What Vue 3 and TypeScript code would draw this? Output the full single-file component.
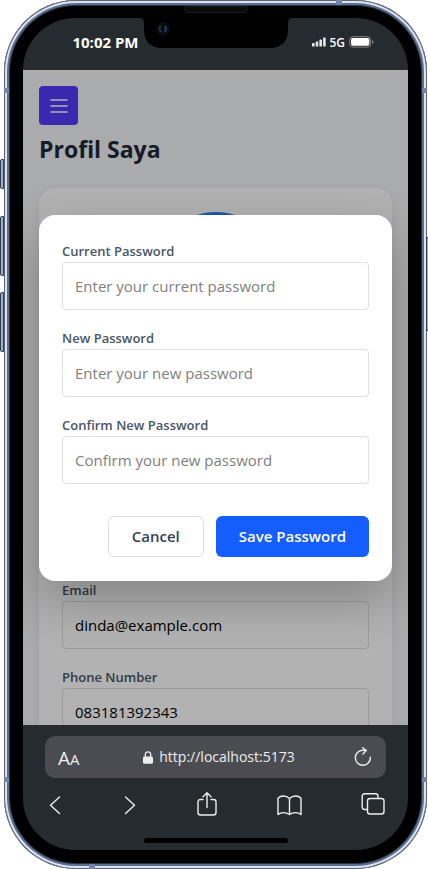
<script setup lang="ts">
import { reactive } from 'vue'

interface Field {
  id: string
  label: string
  placeholder: string
}

const passwordFields: Field[] = [
  { id: 'current', label: 'Current Password', placeholder: 'Enter your current password' },
  { id: 'next', label: 'New Password', placeholder: 'Enter your new password' },
  { id: 'confirm', label: 'Confirm New Password', placeholder: 'Confirm your new password' },
]

const passwords = reactive<Record<string, string>>({ current: '', next: '', confirm: '' })
const profile = reactive({ email: 'dinda@example.com', phone: '083181392343' })
</script>

<template>
  <div class="stage">
    <div class="phone">
      <i class="key key-mute"></i>
      <i class="key key-up"></i>
      <i class="key key-down"></i>
      <i class="key key-power"></i>
      <i class="band band-top"></i>
      <i class="band band-bottom"></i>
      <i class="band band-left-top"></i>
      <i class="band band-left-bottom"></i>
      <i class="band band-right-top"></i>
      <i class="band band-right-bottom"></i>
      <i class="speaker"></i>

      <div class="screen">
        <header class="status">
          <span class="time">10:02 PM</span>
          <svg class="notch" width="152" height="30" viewBox="0 0 152 30" aria-hidden="true">
            <path d="M0 0H152Q148 0 148 5V11Q148 30 129 30H23Q4 30 4 11V5Q4 0 0 0Z" fill="#000" />
            <circle cx="23" cy="11" r="7" fill="#0b0c0f" />
            <circle cx="23" cy="11" r="4" fill="#080c18" />
            <path d="M21 8q-3 3 0 6" stroke="#23464f" stroke-width="1.4" fill="none" />
            <path d="M25 8q2 3 0 6" stroke="#29377c" stroke-width="2" fill="none" />
          </svg>
          <div class="signals">
            <svg width="14" height="10" viewBox="0 0 14 10" fill="#e6e7e8" aria-hidden="true">
              <rect x="0" y="6" width="2.6" height="3.5" rx=".6" />
              <rect x="3.7" y="4.5" width="2.6" height="5" rx=".6" />
              <rect x="7.4" y="2.5" width="2.6" height="7" rx=".6" />
              <rect x="11.1" y="0.5" width="2.6" height="9" rx=".6" />
            </svg>
            <span>5G</span>
            <svg width="25" height="12" viewBox="0 0 25 12" aria-hidden="true">
              <rect x=".7" y=".7" width="21" height="10.4" rx="3" fill="none" stroke="#84878a" />
              <rect x="2" y="2" width="18.4" height="7.8" rx="1.8" fill="#fff" />
              <path d="M23 4.2q1.6.4 1.6 1.7T23 7.7z" fill="#84878a" />
            </svg>
          </div>
        </header>

        <main class="viewport">
          <div class="page">
            <button class="menu" type="button" aria-label="Menu">
              <svg width="24" height="24" viewBox="0 0 24 24" aria-hidden="true">
                <path d="M4 6h16M4 12h16M4 18h16" stroke="#fff" stroke-width="1.6" stroke-linecap="round" />
              </svg>
            </button>
            <h1>Profil Saya</h1>
            <section class="card">
              <div class="portrait"><div class="avatar"></div></div>
              <div class="field">
                <label for="email">Email</label>
                <input id="email" v-model="profile.email" type="email" />
              </div>
              <div class="field">
                <label for="phone">Phone Number</label>
                <input id="phone" v-model="profile.phone" type="tel" />
              </div>
            </section>
          </div>

          <div class="overlay">
            <form class="dialog" role="dialog" @submit.prevent>
              <div v-for="f in passwordFields" :key="f.id" class="field">
                <label :for="f.id">{{ f.label }}</label>
                <input :id="f.id" v-model="passwords[f.id]" type="password" :placeholder="f.placeholder" />
              </div>
              <div class="actions">
                <button class="cancel" type="button">Cancel</button>
                <button class="save" type="submit">Save Password</button>
              </div>
            </form>
          </div>
        </main>

        <footer class="browser">
          <div class="address">
            <button class="text-size" type="button">A<small>A</small></button>
            <div class="url">
              <svg width="10" height="13" viewBox="0 0 10 13" aria-hidden="true">
                <rect x="0" y="5.6" width="10" height="7.2" rx="1.4" fill="#eee" />
                <path d="M2.3 6V3.6a2.7 2.7 0 0 1 5.4 0V6" fill="none" stroke="#eee" stroke-width="1.3" />
              </svg>
              <span>http://localhost:5173</span>
            </div>
            <button class="reload" type="button" aria-label="Reload">
              <svg width="18" height="20" viewBox="0 0 18 20" fill="none" stroke="#eee" stroke-width="1.4" stroke-linecap="round" stroke-linejoin="round" aria-hidden="true">
                <path d="M16.3 10.2A7.5 7.5 0 1 1 8.8 3.300H12" />
                <path d="M8.7 .7L12.2 3.6L8.9 6.900" />
              </svg>
            </button>
          </div>
          <nav class="tools">
            <button type="button" aria-label="Back">
              <svg width="16" height="24" viewBox="0 0 16 24"><path d="M10.500 4L1.500 12.300L10.500 20.500" /></svg>
            </button>
            <button type="button" aria-label="Forward">
              <svg width="14" height="24" viewBox="0 0 14 24"><path d="M1.500 4L10.500 12.300L1.500 20.500" /></svg>
            </button>
            <button type="button" aria-label="Share">
              <svg width="22" height="26" viewBox="0 0 22 26">
                <path d="M6 7.500H3.500Q1 7.500 1 10V20.500Q1 23 3.500 23H16.500Q19 23 19 20.500V10Q19 7.500 16.500 7.500H14" />
                <path d="M10 15.500V1M6 4.800L10 .8L14 4.800" />
              </svg>
            </button>
            <button type="button" aria-label="Bookmarks">
              <svg width="25" height="24" viewBox="0 0 25 24">
                <path d="M12.500 5.500Q10 3 6.500 3T1 5.200V21.500Q3.300 19.600 6.500 19.600T12.500 21.500Q15 19.600 18.500 19.600T24 21.500V5.200Q22 3 18.500 3T12.500 5.500V21.500" />
              </svg>
            </button>
            <button type="button" aria-label="Tabs">
              <svg width="24" height="24" viewBox="0 0 24 24">
                <rect x="6.500" y="5.500" width="16.500" height="15.500" rx="2.500" />
                <path d="M6.500 16.500H3.800Q1.200 16.500 1.200 14V3.300Q1.200 .8 3.800 .8H14.500Q17 .8 17 3.300V5.500" />
              </svg>
            </button>
          </nav>
          <div class="home"></div>
        </footer>
      </div>
    </div>
  </div>
</template>

<style>
body {
  margin: 0;
  background: #fff;
}
</style>

<style scoped>
* {
  box-sizing: border-box;
}
.stage {
  padding: 0 1px 0 4px;
  font-family: "Open Sans", "Noto Sans", sans-serif;
  overflow: hidden;
}
button {
  font: inherit;
  border: 0;
  padding: 0;
  background: none;
  color: inherit;
}
svg {
  display: block;
}
.phone {
  position: relative;
  height: 100vh;
  padding: 18px 19px 19px;
  border-radius: 72px;
  background: #000;
  box-shadow:
    inset 0 0 0 1px #5d6470,
    inset 0 0 0 3px #dce2ef,
    inset 0 0 0 5px #596f8e,
    inset 0 0 0 6px #273341;
}
.key {
  position: absolute;
  width: 4px;
  left: -4px;
  border: 1px solid #303d50;
  border-radius: 2px 0 0 2px;
  background: #9fb0c8;
}
.key-mute { top: 159px; height: 30px; }
.key-up { top: 216px; height: 60px; }
.key-down { top: 292px; height: 60px; }
.key-power {
  top: 237px;
  height: 94px;
  left: auto;
  right: -2px;
  width: 3px;
  border-radius: 0 2px 2px 0;
}
.band {
  position: absolute;
  background: #7484a8;
}
.band-top, .band-bottom { width: 6px; height: 5px; }
.band-top { top: 0; right: 85px; }
.band-bottom { bottom: 0; left: 85px; }
.band-left-top, .band-left-bottom, .band-right-top, .band-right-bottom { width: 5px; height: 5px; }
.band-left-top { left: 0; top: 88px; }
.band-right-top { right: 0; top: 88px; }
.band-left-bottom { left: 0; bottom: 87px; }
.band-right-bottom { right: 0; bottom: 87px; }
.speaker {
  position: absolute;
  top: 6px;
  left: 50%;
  width: 64px;
  height: 7px;
  margin-left: -32px;
  border: 1px solid #1c1c1c;
  border-radius: 2px 2px 4px 4px;
  background: #0a0a0a;
}
.screen {
  display: flex;
  flex-direction: column;
  height: 100%;
  border-radius: 52px;
  overflow: hidden;
  background: #262b2f;
}
.status {
  display: grid;
  grid-template-columns: 1fr 152px 1fr;
  height: 52px;
  flex: none;
  color: #fff;
}
.time {
  justify-self: end;
  margin-top: 14px;
  padding-right: 1px;
  font-size: 15px;
  line-height: 20px;
  font-weight: 700;
}
.signals {
  display: flex;
  align-items: center;
  gap: 4px;
  height: 20px;
  margin-top: 14px;
  padding-left: 20px;
  font-size: 12px;
  font-weight: 600;
}
.viewport {
  position: relative;
  flex: 1;
  min-height: 0;
  overflow: hidden;
  background: #f4f5f7;
}
.page {
  padding: 16px;
}
.menu {
  display: flex;
  align-items: center;
  justify-content: center;
  width: 39px;
  height: 39px;
  border-radius: 4px;
  background: #543bf9;
}
h1 {
  margin: 8px 0 23px;
  font-size: 23px;
  line-height: 32px;
  font-weight: 700;
  color: #1e2939;
}
.card {
  display: flex;
  flex-direction: column;
  gap: 16px;
  padding: 24px 23px;
  border-radius: 16px;
  background: #fff;
  box-shadow: 0 4px 12px rgba(0, 0, 0, 0.06);
}
.portrait {
  min-height: 350px;
}
.avatar {
  width: 128px;
  height: 128px;
  margin: 0 auto;
  border-radius: 50%;
  background: #2b7fff;
}
.field label {
  display: block;
  height: 23px;
  font-size: 13px;
  line-height: 24px;
  font-weight: 600;
  color: #4a5565;
}
.field input {
  display: block;
  width: 100%;
  height: 48px;
  padding: 0 12px;
  border: 1px solid #dde0e6;
  border-radius: 4px;
  outline: 0;
  background: transparent;
  font: inherit;
  font-size: 15px;
  color: #000;
}
.field input::placeholder {
  color: #808080;
  opacity: 1;
}
.overlay {
  position: absolute;
  inset: 0;
  display: flex;
  align-items: center;
  justify-content: center;
  padding: 16px;
  background: rgba(0, 0, 0, 0.3);
}
.dialog {
  display: flex;
  flex-direction: column;
  gap: 16px;
  width: 100%;
  padding: 24px 23px;
  border-radius: 16px;
  background: #fff;
  box-shadow: 0 20px 50px rgba(0, 0, 0, 0.25);
}
.actions {
  display: flex;
  justify-content: flex-end;
  gap: 12px;
  padding-top: 16px;
  font-size: 15px;
  font-weight: 600;
}
.actions button {
  height: 41px;
  padding: 0 23px;
  border-radius: 6px;
}
.actions .cancel {
  border: 1px solid #dde0e6;
  color: #364153;
}
.actions .save {
  background: #155dfc;
  color: #fff;
}
.browser {
  flex: none;
  padding: 11px 22px 7px;
  color: #eee;
}
.address {
  display: grid;
  grid-template-columns: 48px 1fr 40px;
  align-items: center;
  height: 42px;
  padding: 0 14px 0 13px;
  border-radius: 10px;
  background: #4a4c51;
}
.text-size {
  padding-top: 3px;
  text-align: left;
  font-size: 19px;
  line-height: 24px;
}
.text-size small {
  font-size: 15px;
}
.url {
  display: flex;
  align-items: center;
  justify-content: center;
  gap: 6px;
  font-size: 14px;
  line-height: 20px;
}
.reload {
  justify-self: end;
}
.tools {
  display: flex;
  align-items: center;
  justify-content: space-between;
  height: 28px;
  margin-top: 13px;
  padding: 0 1px 0 4px;
}
.tools svg {
  fill: none;
  stroke: #eee;
  stroke-width: 1.4;
  stroke-linecap: round;
  stroke-linejoin: round;
}
.home {
  width: 144px;
  height: 5px;
  margin: 19px auto 0;
  border-radius: 3px;
  background: #000;
}
</style>
